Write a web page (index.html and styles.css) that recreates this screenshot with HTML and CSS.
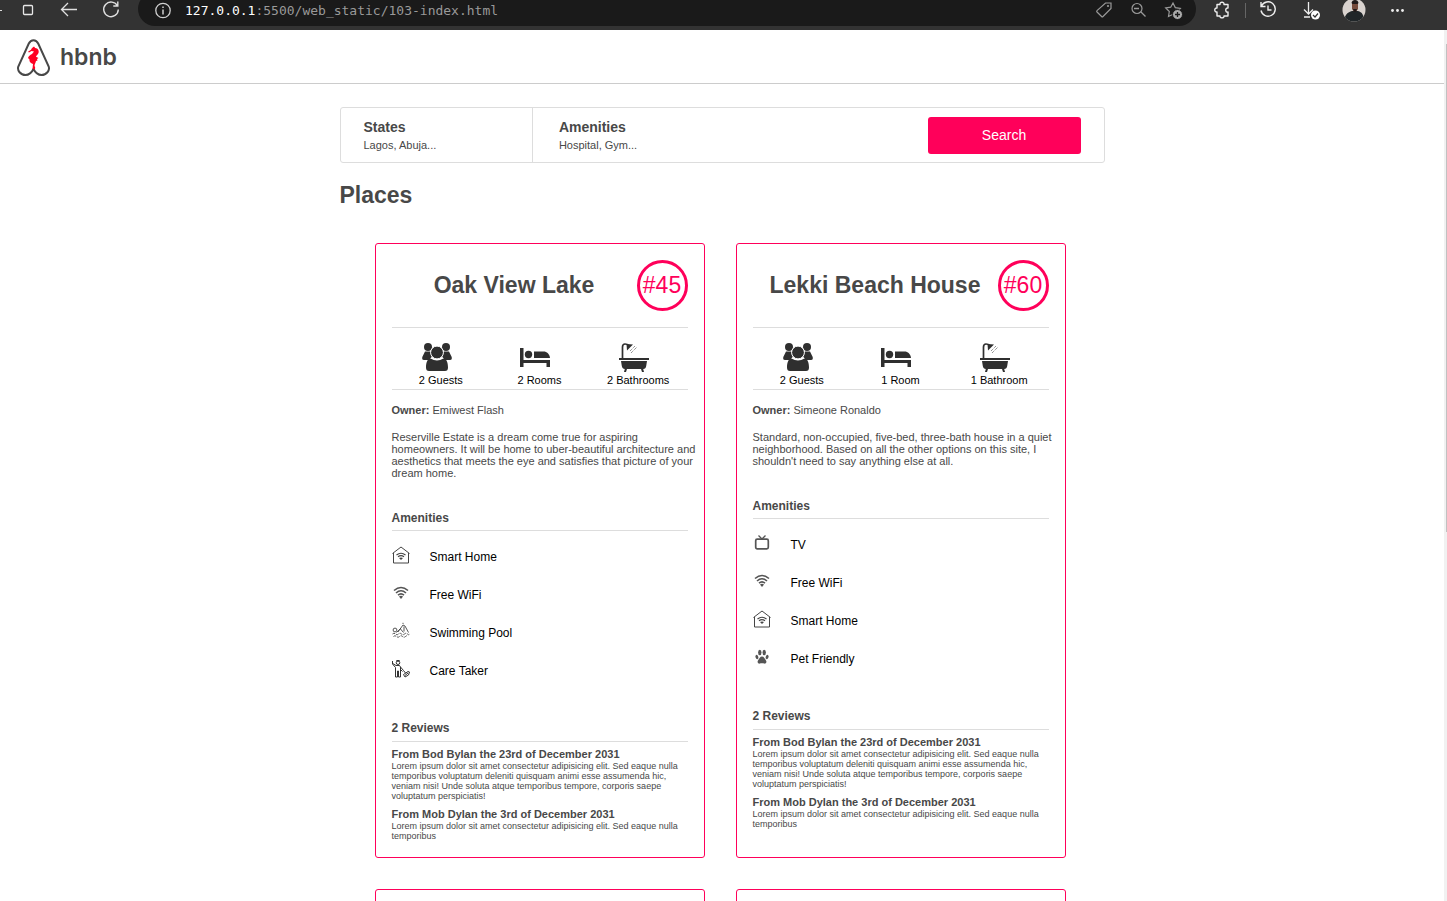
FILE: index.html
```html
<!DOCTYPE html>
<html lang="en">
<head>
<meta charset="utf-8">
<title>hbnb</title>
<link rel="stylesheet" href="styles.css">
</head>
<body>
<svg class="sprite" aria-hidden="true">
  <symbol id="guests" viewBox="0 0 30 30">
    <g fill="#2f2f2f"><circle cx="6" cy="5" r="4"/><circle cx="24" cy="5" r="4"/>
    <path d="M3 9.500h5l2 5-3 3.500H2C.2 18 0 17 .3 15zM27 9.500h-5l-2 5 3 3.500h5c1.800 0 2-1 1.700-3z"/>
    <circle cx="15" cy="10.500" r="6.400" stroke="#fff"/>
    <path d="M8.500 16.500q6.500 4 13 0c3 0 4.500 4 4.500 9 0 2.500-1 3.500-3 3.500H7c-2 0-3-1-3-3.500 0-5 1.500-9 4.500-9z"/></g>
  </symbol>
  <symbol id="bed" viewBox="0 0 30 30">
    <g fill="#2f2f2f"><path d="M0 6h3.500v12H30v7h-3.500v-4h-23v4H0z"/><circle cx="8.500" cy="12.500" r="3.700"/><path d="M14 9.500h9.500c3.500 0 6 2.500 6.500 6.500H14z"/></g>
  </symbol>
  <symbol id="bath" viewBox="0 0 30 30">
    <path d="M3.500 16V5c0-2 1-3 2.500-3s3 .7 3.500 1.500" fill="none" stroke="#2f2f2f" stroke-width="1.700"/>
    <path d="M7.500 2l6.500.5-6 6z" fill="#2f2f2f"/><path d="M11 9l5-5M12 11l6-6" stroke="#666" stroke-dasharray="1 1"/>
    <path d="M0 16h30v2H0zM2 19h26l-.8 5c-.3 2-1.200 3-3 3l.8 3h-2l-1-3H8l-1 3H5l.8-3c-1.500-.2-2.700-1-3-3z" fill="#2f2f2f"/>
  </symbol>
  <symbol id="wifi" viewBox="0 0 18 18">
    <g fill="none" stroke="#555" stroke-width="1.600"><path d="M2 6.500q7-6 14 0M4 9q5-4.500 10 0M6 11.200q3-2.600 6 0"/></g><path d="M7 12.500q2-1.500 4 0L9 15z" fill="#555"/>
  </symbol>
  <symbol id="home" viewBox="0 0 18 18">
    <path d="M1.500 7v10h15V7M.5 7.500L9 1l8.500 6.500" fill="none" stroke="#444"/>
    <path d="M4.500 9q4.500-3.500 9 0M6 10.800q3-2.300 6 0" fill="none" stroke="#444" stroke-width="1.200"/><path d="M7 12q2-1 4 0l-2 2z" fill="#444"/>
  </symbol>
  <symbol id="tv" viewBox="0 0 18 18">
    <rect x="2.700" y="5.200" width="12.600" height="9.600" rx="1.500" fill="none" stroke="#555" stroke-width="1.700"/><path d="M5.500 1.500L9 5l3.500-3.500" fill="none" stroke="#555" stroke-width="1.300"/>
  </symbol>
  <symbol id="paw" viewBox="0 0 18 18">
    <g fill="#555"><ellipse cx="6.800" cy="4.500" rx="1.700" ry="2.800"/><ellipse cx="11.200" cy="4.500" rx="1.700" ry="2.800"/><ellipse cx="3.900" cy="9" rx="1.400" ry="2.200" transform="rotate(-20 3.900 9)"/><ellipse cx="14.100" cy="9" rx="1.400" ry="2.200" transform="rotate(20 14.100 9)"/><path d="M9 8.500c2 0 2.500 2 3.700 3.500 1.600 2 .3 4-1.500 3.600-1.400-.4-3-.4-4.400 0C5 16 3.700 14 5.300 12 6.500 10.500 7 8.500 9 8.500z"/></g>
  </symbol>
  <symbol id="pool" viewBox="0 0 18 18">
    <g fill="none" stroke="#444" stroke-width=".9"><circle cx="3" cy="8" r="1.900"/><path d="M4.500 10.500L9 6M6 10l5-7 2 1 3.500 6.500M8.500 7l3 3.500M11 2V.8M12 4.500v5"/><path d="M.5 12q1.500-1.500 3 0t3 0 3 0 3 0 3 0 2 0M1.500 14.500q1.500-1.500 3 0t3 0 3 0 3 0 2 0" stroke-dasharray="3 1"/></g>
  </symbol>
  <symbol id="care" viewBox="0 0 18 18">
    <g fill="none" stroke="#333"><circle cx="6" cy="2.700" r="1.800"/><path d="M4.500 1.200q1.500-1.200 3 0" stroke-width="1.500"/><path d="M4 5.500L.8 3.500M.5 1v3l3 3.500v9.500h2v-6h1v6h2V7l-1-1.500H4M8.500 7l3 3.500 2 2.500M8 9l2.500 2.500"/><path d="M11.500 14.500l4.500-3 1.500.5-1 3-3.500 2zM13 15.500l3-2.500"/></g>
  </symbol>
</svg>

<div class="browser">
  <nav class="nav-buttons" aria-label="Browser">
    <svg class="dash" viewBox="0 0 7 20"><path d="M0 10.500h2" stroke="#ddd"/></svg>
    <button class="tool" aria-label="Restore"><svg width="20" height="20"><rect x="5.500" y="5.500" width="9" height="9" rx="1" fill="none" stroke="#e8e8e8" stroke-width="1.300"/></svg></button>
    <button class="tool" aria-label="Back"><svg width="20" height="20"><path d="M17 9.500H2M8 3L1.500 9.500 8 16" fill="none" stroke="#e0e0e0" stroke-width="1.300"/></svg></button>
    <button class="tool" aria-label="Reload"><svg width="20" height="20"><path d="M15.500 6A7.300 7.300 0 1 0 16.300 9.500M15.800 1.500V6h-4.500" fill="none" stroke="#e0e0e0" stroke-width="1.400"/></svg></button>
  </nav>
  <div class="address">
    <svg width="22" height="20"><circle cx="11" cy="9.500" r="7.200" fill="none" stroke="#d0d0d0" stroke-width="1.300"/><path d="M11 8.500v5M11 5.500V7" stroke="#d0d0d0" stroke-width="1.500"/></svg>
    <span class="url"><b>127.0.0.1</b>:5500/web_static/103-index.html</span>
    <svg class="slot" viewBox="0 0 34 20"><path d="M18.500 2H24v5.500l-8 8q-.7.700-1.400 0L10 11q-.7-.7 0-1.400z" fill="none" stroke="#999" stroke-width="1.200"/><circle cx="21" cy="5" r="1.100" fill="#999"/></svg>
    <svg class="slot" viewBox="0 0 34 20"><path d="M20 11l4.500 4.500M13 7.500h5" stroke="#999" stroke-width="1.300"/><circle cx="16" cy="7.500" r="5" fill="none" stroke="#999" stroke-width="1.200"/></svg>
    <svg class="slot star" viewBox="0 0 34 20"><path d="M16 2l2.300 4.600 5 .8-3.600 3.600.8 4.500-4.500-2.200-4.500 2.200.8-5-3.600-3.500 5-.8z" fill="none" stroke="#999" stroke-width="1.200"/><circle cx="20.500" cy="13.500" r="5" fill="#aaa" stroke="#1a1a1a"/><path d="M18 13.500h5M20.500 11v5" stroke="#1a1a1a" stroke-width="1.300"/></svg>
  </div>
  <nav class="extras" aria-label="Browser tools">
    <button class="tool puzzle" aria-label="Extensions"><svg width="20" height="20"><path d="M5 4.500h3c-.5-3 4.500-3 4 0h4V8c-3-.7-3 5 0 4v4h-4c.5 2.500-4.500 2.500-4 0H5v-4c-3 .7-3-4.500 0-4z" fill="none" stroke="#eee" stroke-width="1.400" stroke-linejoin="round"/></svg></button>
    <span class="divider"></span>
    <button class="tool" aria-label="History"><svg width="20" height="20"><path d="M3.500 6A7.200 7.200 0 1 1 3 10.500M3 2v4.500h4.500M10 5.500V10h3.500" fill="none" stroke="#eee" stroke-width="1.400"/></svg></button>
    <button class="tool" aria-label="Downloads"><svg width="20" height="20"><path d="M7.500 2v12M3 9.500L7.500 14 12 9.500M3 17h6" fill="none" stroke="#eee" stroke-width="1.300"/><circle cx="14.500" cy="15" r="4.500" fill="#fff"/><path d="M12 15l2 2 3-3.500" fill="none" stroke="#333" stroke-width="1.200"/></svg></button>
    <button class="tool" aria-label="Profile"><svg width="24" height="24" viewBox="0 0 24 24"><clipPath id="face"><circle cx="12" cy="12" r="11.500"/></clipPath><g clip-path="url(#face)"><path fill="#d9d3cf" d="M0 0h24v24H0z"/><path fill="#202629" d="M2 24c0-7 4-10 8-11h6c4 1 6 4 6 11z"/><path fill="#754b3c" d="M10 4h6v7q-3 5-6 0z"/><path fill="#201b1b" d="M9.500 5q.5-3 3.500-3t3.500 3l-1 1h-5zM11 11h4l-1 3h-2z"/></g></svg></button>
    <button class="tool" aria-label="More"><svg width="20" height="20"><g fill="#eee"><circle cx="5.500" cy="10.500" r="1.400"/><circle cx="10.500" cy="10.500" r="1.400"/><circle cx="15.500" cy="10.500" r="1.400"/></g></svg></button>
  </nav>
</div>

<div class="viewport">
<div class="page">
  <header class="site-header">
    <svg class="logo" viewBox="0 0 34 38"><path d="M17.500 31C15.500 35 12.500 37 9.500 37 4.500 37 1 32.500 2.300 28.500L12.800 5.500C15 1 20 1 22.200 5.500L32.700 28.500C34 32.500 30.500 37 25.500 37c-3 0-6-2-8-6z" fill="none" stroke="#484848" stroke-width="2"/><path d="M18 8.500l1.200 1.500c2.800.3 4.100 2.700 3.300 5-.8 2.200-2.500 2.500-2.500 3.800l2.500 1.200-1.500 1 .5 1.500-1.500.5c-.5 2-1.500 3.500-1.500 5 1 1.500 1 3-.5 3.500l-1.500-.8.5-4.700c-2.300-.5-4-2.500-3.500-4.500l-1.500-1.500c.5-2 2-3 4-4l2-2.500-2.500-.5-2.500 1.500-1-.8 3-2c.5-1.500 1.500-2.200 3-3.200z" fill="#ff0022"/></svg>
    <span class="brand">hbnb</span>
  </header>
  <main class="container">
    <section class="filters">
      <div class="filter states"><h3>States</h3><p>Lagos, Abuja...</p></div>
      <div class="filter"><h3>Amenities</h3><p>Hospital, Gym...</p></div>
      <button class="search">Search</button>
    </section>
    <h1>Places</h1>
    <section class="places">
      <article class="place">
        <div class="headline"><h2>Oak View Lake</h2><div class="price">#45</div></div>
        <div class="features">
          <div class="feature"><svg><use href="#guests"/></svg><p>2 Guests</p></div>
          <div class="feature"><svg><use href="#bed"/></svg><p>2 Rooms</p></div>
          <div class="feature"><svg><use href="#bath"/></svg><p>2 Bathrooms</p></div>
        </div>
        <p class="owner"><b>Owner:</b> Emiwest Flash</p>
        <p class="description">Reserville Estate is a dream come true for aspiring<br>homeowners. It will be home to uber-beautiful architecture and<br>aesthetics that meets the eye and satisfies that picture of your<br>dream home.</p>
        <h3 class="section-title">Amenities</h3>
        <ul class="amenities">
          <li><svg><use href="#home"/></svg>Smart Home</li>
          <li><svg><use href="#wifi"/></svg>Free WiFi</li>
          <li><svg><use href="#pool"/></svg>Swimming Pool</li>
          <li><svg><use href="#care"/></svg>Care Taker</li>
        </ul>
        <h3 class="section-title">2 Reviews</h3>
        <div class="reviews">
          <h4>From Bod Bylan the 23rd of December 2031</h4>
          <p>Lorem ipsum dolor sit amet consectetur adipisicing elit. Sed eaque nulla temporibus voluptatum deleniti quisquam animi esse assumenda hic, veniam nisi! Unde soluta atque temporibus tempore, corporis saepe voluptatum perspiciatis!</p>
          <h4>From Mob Dylan the 3rd of December 2031</h4>
          <p>Lorem ipsum dolor sit amet consectetur adipisicing elit. Sed eaque nulla temporibus</p>
        </div>
      </article>
      <article class="place">
        <div class="headline"><h2>Lekki Beach House</h2><div class="price">#60</div></div>
        <div class="features">
          <div class="feature"><svg><use href="#guests"/></svg><p>2 Guests</p></div>
          <div class="feature"><svg><use href="#bed"/></svg><p>1 Room</p></div>
          <div class="feature"><svg><use href="#bath"/></svg><p>1 Bathroom</p></div>
        </div>
        <p class="owner"><b>Owner:</b> Simeone Ronaldo</p>
        <p class="description">Standard, non-occupied, five-bed, three-bath house in a quiet<br>neighborhood. Based on all the other options on this site, I<br>shouldn't need to say anything else at all.</p>
        <h3 class="section-title">Amenities</h3>
        <ul class="amenities">
          <li><svg><use href="#tv"/></svg>TV</li>
          <li><svg><use href="#wifi"/></svg>Free WiFi</li>
          <li><svg><use href="#home"/></svg>Smart Home</li>
          <li><svg><use href="#paw"/></svg>Pet Friendly</li>
        </ul>
        <h3 class="section-title">2 Reviews</h3>
        <div class="reviews">
          <h4>From Bod Bylan the 23rd of December 2031</h4>
          <p>Lorem ipsum dolor sit amet consectetur adipisicing elit. Sed eaque nulla temporibus voluptatum deleniti quisquam animi esse assumenda hic, veniam nisi! Unde soluta atque temporibus tempore, corporis saepe voluptatum perspiciatis!</p>
          <h4>From Mob Dylan the 3rd of December 2031</h4>
          <p>Lorem ipsum dolor sit amet consectetur adipisicing elit. Sed eaque nulla temporibus</p>
        </div>
      </article>
      <article class="place next"></article>
      <article class="place next"></article>
    </section>
  </main>
</div>
<div class="scrollbar"><div class="thumb"></div></div>
</div>
</body>
</html>
```
FILE: styles.css
```css
* { box-sizing: border-box; margin: 0; padding: 0; }
body { display: flex; flex-direction: column; height: 100vh; overflow: hidden; background: #fff; color: #484848; font-family: "Liberation Sans", Arial, sans-serif; font-size: 11px; line-height: 12px; }
svg { display: block; flex: none; }
button { border: 0; background: none; font: inherit; color: inherit; }
.sprite { position: absolute; width: 0; height: 0; }

.browser { display: flex; flex: none; align-items: flex-start; height: 30px; overflow: hidden; background: #333; }
.nav-buttons, .extras { display: flex; flex: none; height: 20px; align-items: center; }
.nav-buttons { width: 138px; }
.extras { width: 251px; padding-left: 3px; }
.dash { width: 7px; height: 20px; }
.tool { display: flex; flex: none; width: 42px; justify-content: center; align-items: center; }
.extras .tool { width: 43px; }
.extras .puzzle { width: 46px; }
.divider { width: 1px; height: 15px; background: #666; }
.address { display: flex; flex: 1; align-items: center; height: 34px; margin-top: -8px; padding: 3px 5px 0 14px; border-radius: 17px; background: #1a1a1a; }
.url { flex: 1; padding-left: 11px; color: #999; font-family: "DejaVu Sans Mono", monospace; font-size: 13px; line-height: 20px; white-space: nowrap; }
.url b { color: #fff; font-weight: normal; }
.slot { width: 34px; height: 20px; }
.star { margin-left: 2px; }

.viewport { display: flex; flex: 1; min-height: 0; }
.page { flex: 1; overflow: hidden; }
.scrollbar { width: 3px; padding: 14px 0 0 2px; background: #f1f1f1; }
.thumb { height: 57%; background: #c1c1c1; }

.site-header { display: flex; align-items: center; gap: 10px; height: 54px; padding-left: 16px; border-bottom: 1px solid #ccc; }
.logo { width: 34px; height: 38px; }
.brand { font-family: Inter, sans-serif; font-size: 23px; font-weight: 600; line-height: 30px; }

.container { width: 100%; max-width: 765px; margin: 0 auto; padding-top: 23px; }
.filters { display: flex; align-items: center; height: 56px; padding-right: 23px; border: 1px solid #ddd; border-radius: 3px; }
.filter { flex: 1; padding: 0 0 2px 26px; }
.states { display: flex; flex: none; flex-direction: column; justify-content: center; width: 26%; height: 100%; padding-left: 23px; border-right: 1px solid #ddd; }
.filter h3 { margin-bottom: 3px; font-size: 14px; line-height: 18px; }
.search { width: 153px; height: 37px; border-radius: 3px; background: #ff005a; color: #fff; font-size: 14px; }
h1 { margin: 18px 0 34px; font-size: 23px; line-height: 28px; }

.places { display: grid; grid-template-columns: 1fr 1fr; gap: 31px; padding: 0 39px 31px 35px; }
.place { min-width: 0; padding: 0 16px 16px; border: 1px solid #ff005a; border-radius: 3px; }
.next { height: 614px; }
.headline { display: flex; align-items: center; padding: 16px 0; border-bottom: 1px solid #ddd; }
.headline h2 { flex: 1; padding-bottom: 2px; text-align: center; font-size: 23px; line-height: 28px; white-space: nowrap; }
.price { display: flex; flex: none; align-items: center; justify-content: center; width: 51px; height: 51px; padding-bottom: 1px; border: 3px solid #ff005a; border-radius: 50%; color: #ff005a; font-size: 23px; }
.features { display: grid; grid-template-columns: repeat(3, 1fr); padding: 14px 0 3px; border-bottom: 1px solid #ddd; }
.feature { display: flex; flex-direction: column; align-items: center; gap: 2px; color: #000; }
.feature svg { width: 30px; height: 30px; margin-right: 8px; }
.owner { margin: 14px 0 15px; }
.description { white-space: nowrap; }
.section-title { padding-bottom: 5px; border-bottom: 1px solid #ddd; font-size: 12px; line-height: 14px; }
.description + .section-title { margin-top: 32px; }
.amenities { padding: 7px 0 31px; list-style: none; }
.amenities li { display: flex; align-items: center; gap: 20px; height: 38px; color: #000; font-size: 12px; }
.amenities svg { width: 18px; height: 18px; margin-bottom: 4px; }
.amenities + .section-title { padding-bottom: 6px; }
.reviews { padding-top: 6px; }
.reviews p { margin-bottom: 7px; font-size: 9px; line-height: 10px; }
.reviews h4 { line-height: 13px; }
.reviews p:last-child { margin-bottom: 0; }
```
